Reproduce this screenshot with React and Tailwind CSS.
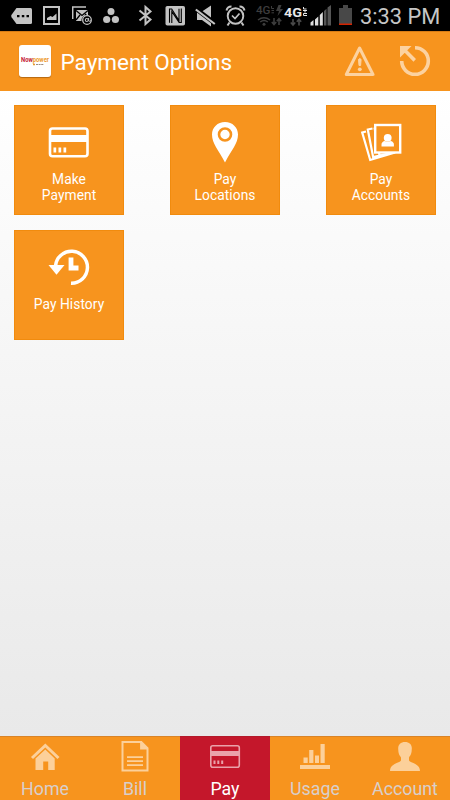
import React from "react";

/* Every icon is drawn in screen units; `box` gives its x, y, width and height. */
function Glyph({ box, className = "", children }) {
  const [x, y, w, h] = box;
  return (
    <svg width={w} height={h} viewBox={`${x} ${y} ${w} ${h}`} className={`block shrink-0 ${className}`} fill="none">
      {children}
    </svg>
  );
}

function StatusBar() {
  const c = "#c3c3c3";
  return (
    <div className="flex h-[31px] w-full shrink-0 bg-black">
      <Glyph box={[11, 0, 21, 31]} className="ml-[11px]">
        <path d="M16.5 8H30.500Q32 8 32 9.500V22.500Q32 24 30.500 24H16.500L11.600 17.200Q10.800 16 11.600 14.800Z" fill={c} />
        <path d="M17 15h2.500v2.200H17zM21.800 15h2.500v2.200h-2.500zM26.500 15H29v2.200h-2.500z" fill="#000" />
      </Glyph>
      <Glyph box={[43, 0, 17, 31]} className="ml-[11px]">
        <rect x="44" y="7" width="15" height="17" stroke={c} strokeWidth="2" />
        <path d="M47 20v-2l3.500-2 2 1 4-3.500V20z" fill={c} />
      </Glyph>
      <Glyph box={[72, 0, 20, 31]} className="ml-[12px]">
        <path d="M72.700 19V7H86" stroke={c} strokeWidth="1.500" />
        <path d="M76 10h12v5.500a5 5 0 0 0-6.500 5.500H76z" fill={c} />
        <path d="M76 10.500l6 5 6-5M76 20l4-5M88 17l-3-3" stroke="#000" strokeWidth="1.300" />
        <circle cx="87" cy="20" r="4.300" fill="#000" stroke={c} strokeWidth="1.300" />
        <circle cx="86.800" cy="20" r="1.500" stroke={c} strokeWidth="1.100" />
        <path d="M88.600 18v2.800q1.300 1.200 2.300-.3" stroke={c} strokeWidth="1" />
      </Glyph>
      <Glyph box={[103, 0, 17, 31]} className="ml-[11px]">
        <circle cx="111" cy="11.500" r="3.500" fill={c} />
        <circle cx="106.700" cy="19.500" r="3.600" fill={c} />
        <circle cx="115.400" cy="19.500" r="3.600" fill={c} />
      </Glyph>
      <Glyph box={[138, 0, 15, 31]} className="ml-[18px]">
        <path d="M139.500 10.500l11 9-5 4.500V7l5 4.500-11 9" stroke={c} strokeWidth="2" />
      </Glyph>
      <Glyph box={[165, 0, 20, 31]} className="ml-[12px]">
        <rect x="165.500" y="6" width="19.500" height="19.500" rx="1.800" fill={c} />
        <path d="M169.500 22.800V9h2.200l7.300 11.500V8.800M181.300 8.500v14h-2.200L171.800 11.500v11.500" stroke="#000" strokeWidth="1.100" />
      </Glyph>
      <Glyph box={[195, 0, 21, 31]} className="ml-[10px]">
        <path d="M197 11.500h5l9-6v21L202 20h-5z" fill={c} />
        <path d="M195.500 8.500l19 14.500" stroke="#000" strokeWidth="4.600" />
        <path d="M195.800 9.500l19 14.500" stroke={c} strokeWidth="2.200" />
      </Glyph>
      <Glyph box={[225, 0, 21, 31]} className="ml-[9px]">
        <circle cx="235.500" cy="16" r="7.800" stroke={c} strokeWidth="1.900" />
        <path d="M226.500 10.500a5 5 0 0 1 5-4M244.500 10.500a5 5 0 0 0-5-4M229.500 22.500l-2 3M241.500 22.500l2 3" stroke={c} strokeWidth="2" />
        <path d="M232 15.500l3 3 4.500-5" stroke={c} strokeWidth="1.700" />
      </Glyph>
      <Glyph box={[255, 0, 28, 31]} className="ml-[9px] text-[#3d3d3d]">
        <text x="256" y="14" fontFamily="Roboto, sans-serif" fontWeight="500" fontSize="11" textLength="14.500" lengthAdjust="spacingAndGlyphs" fill="currentColor">4G</text>
        <path d="M271.500 6v2.500h2.500M271.500 10.500h2.500M271.500 12.800h2.500" stroke="currentColor" />
        <path d="M278.500 5h3l-1.500 4h3l-5.500 7 1.500-5H276z" fill="currentColor" />
        <path d="M258 20q6-4.500 12 0M260.200 22q3.800-3 7.600 0" stroke="currentColor" strokeWidth="1.500" />
        <circle cx="264" cy="24.300" r="1.500" fill="currentColor" />
        <path d="M274 18v6M271.800 22l2.200 2.500 2.200-2.500M279 25v-6M276.800 21.200l2.200-2.500 2.200 2.500" stroke="currentColor" strokeWidth="1.600" />
      </Glyph>
      <Glyph box={[283, 0, 25, 31]} className="ml-0 text-[#e8e8e8]">
        <text x="284" y="17" fontFamily="Roboto, sans-serif" fontWeight="700" fontSize="13.500" textLength="18" lengthAdjust="spacingAndGlyphs" fill="currentColor">4G</text>
        <path d="M303.500 7v2h3M303 10.500h4M305 10.500v2M307 13.500h-3.500v2h3.500" stroke="currentColor" />
        <path d="M293 19v6M290.800 22.500l2.200 2.500 2.200-2.500M299 25.500v-6M296.800 21.700l2.200-2.500 2.200 2.500" stroke="#4a4a4a" strokeWidth="1.600" />
      </Glyph>
      <Glyph box={[310, 0, 21, 31]} className="ml-[2px]">
        <path d="M310.500 25.500v-3l3-2.500v5.500zM315 25.500v-6l3.300-3v9zM319.800 25.500V15l3-3v13.500z" fill="#dedede" />
        <path d="M324 25.500V11l2.500-2.300v16.800zM327.500 25.500V7.500L331 5v20.500z" fill="#555" />
      </Glyph>
      <Glyph box={[339, 0, 13, 31]} className="ml-[8px]">
        <path d="M343 5h5v3h4v17h-13V8h4z" fill="#484848" />
        <path d="M339 23.500h13V25h-13z" fill="#d52300" />
      </Glyph>
      <span className="ml-[8px] mt-[2px] whitespace-nowrap text-[21.800px] leading-[30px] text-[#c6c6c6]">3:33 PM</span>
    </div>
  );
}

function Header() {
  return (
    <header className="flex h-[60px] shrink-0 border-t border-[#d77c15] bg-[#f7941e]">
      <div className="ml-[19px] mt-[13px] h-8 w-8 shrink-0 rounded-[3px] bg-white shadow-[0_1px_1px_rgba(100,50,0,0.45)]">
        <Glyph box={[0, 0, 32, 32]}>
          <text x="2" y="17.300" fontFamily="Roboto, sans-serif" fontWeight="700" fontSize="6.500" textLength="28" lengthAdjust="spacingAndGlyphs" fill="#c51a35">
            Now<tspan fill="#ee9b2b">power</tspan>
          </text>
          <path d="M14 19.500h2" stroke="#e49b2e" strokeWidth="1.500" />
          <path d="M17 19.500h8" stroke="#9a8b80" strokeDasharray="2 .6" />
        </Glyph>
      </div>
      <h1 className="ml-[9.500px] whitespace-nowrap text-[22.500px] font-normal leading-[61px] text-white">Payment Options</h1>
      <div className="ml-auto mr-[18px] mt-[13px] flex gap-[24px]">
        <Glyph box={[344, 45, 31, 34]}>
          <path d="M359.600 48L373 74.500H346.300Z" stroke="#fcd2a0" strokeWidth="3" strokeLinejoin="round" />
          <path d="M358.500 59.500q1.300-2 2.600 0l-.5 6h-1.600z" fill="#fcd2a0" stroke="#fcd2a0" />
          <circle cx="359.800" cy="69.300" r="1.900" fill="#fcd2a0" />
        </Glyph>
        <Glyph box={[399, 45, 33, 34]}>
          <path d="M415 47.700A13.300 13.300 0 1 1 401.700 61" stroke="#fcd2a0" strokeWidth="3.600" />
          <path d="M400 46h11.500L400 57.500zM404.500 52.500l2.500-2.500 9 9-2.500 2.800z" fill="#fcd2a0" />
        </Glyph>
      </div>
    </header>
  );
}

const tiles = [
  {
    label: ["Make", "Payment"],
    icon: (
      <Glyph box={[48, 121, 42, 44]}>
        <rect x="50" y="128.500" width="37.500" height="27.800" rx="2.500" stroke="#fff" strokeWidth="2.600" />
        <path d="M50 135h38v7H50zM53.500 147.500h2.700v5h-2.700zM58.500 147.500h2.700v5h-2.700zM63.500 147.500h2.700v5h-2.700z" fill="#fff" />
      </Glyph>
    ),
  },
  {
    label: ["Pay", "Locations"],
    icon: (
      <Glyph box={[205, 121, 40, 44]}>
        <path d="M225 122c-7.500 0-13 5.500-13 12.500 0 9 6.500 15.500 13 28 6.500-12.500 13-19 13-28C238 127.500 232.500 122 225 122z" fill="#fff" />
        <circle cx="225" cy="134.500" r="6" stroke="#f7941e" strokeWidth="2.600" />
      </Glyph>
    ),
  },
  {
    label: ["Pay", "Accounts"],
    icon: (
      <Glyph box={[360, 121, 42, 44]}>
        <path d="M366 131.500l-3.800 1 8 27.500 25-7.500M372.500 128.500l-4.700 1 5.300 27.500 22-5M374.500 127.500l5 28" stroke="#fff" strokeWidth="2.200" />
        <rect x="375.200" y="125" width="25" height="27.500" fill="#f7941e" stroke="#fff" strokeWidth="2.400" />
        <circle cx="387.700" cy="137.800" r="3.900" fill="#fff" />
        <path d="M381.500 146.500v-2q0-2.500 3-3.500l3.200 1 3.200-1q3 1 3 3.500v2z" fill="#fff" />
      </Glyph>
    ),
  },
  {
    label: ["Pay History"],
    icon: (
      <Glyph box={[48, 246, 42, 44]}>
        <path d="M55.500 266A16 16 0 1 1 71 283.300" stroke="#fff" strokeWidth="3.500" />
        <path d="M48.500 265h16l-8 9.800z" fill="#fff" />
        <path d="M71 257.500v10.500h7.500" stroke="#fff" strokeWidth="4.800" />
      </Glyph>
    ),
  },
];

function Tile({ tile }) {
  return (
    <button className="flex h-[110px] w-[110px] flex-col items-center border border-[#f18b0e] bg-[#f7941e] pt-[15px] text-white">
      {tile.icon}
      <span className="mt-[6px] text-[13.800px] leading-4 tracking-[0.05px]">
        {tile.label.map((line) => (
          <span key={line} className="block whitespace-nowrap">{line}</span>
        ))}
      </span>
    </button>
  );
}

const cream = "#fcd09a";
const tabs = [
  {
    name: "Home",
    icon: (
      <Glyph box={[29, 738, 32, 36]}>
        <path d="M32 758l13.300-12.500L58.500 758" stroke={cream} strokeWidth="3" />
        <path d="M35.500 758.500l9.800-9 9.400 9V770h-6.500v-8.500h-5V770h-7.700z" fill={cream} />
      </Glyph>
    ),
  },
  {
    name: "Bill",
    icon: (
      <Glyph box={[119, 738, 32, 36]}>
        <path d="M122.500 742h18.800l6.200 6.200v22.300h-25z" stroke={cream} strokeWidth="2" />
        <path d="M141 741v7.500h7M127 757.200h16M127 761.200h16M127 765.200h16" stroke={cream} strokeWidth="1.800" />
        <path d="M141 742v6.500h6.500z" fill={cream} />
      </Glyph>
    ),
  },
  {
    name: "Pay",
    active: true,
    icon: (
      <Glyph box={[209, 738, 32, 36]}>
        <rect x="210.800" y="745.800" width="28.500" height="21.500" rx="2" stroke="#eaa2aa" strokeWidth="1.600" />
        <path d="M211 751h28v5h-28zM213.500 760.500h2v3.500h-2zM217.300 760.500h2v3.500h-2zM221.200 760.500h2v3.500h-2z" fill="#eaa2aa" />
      </Glyph>
    ),
  },
  {
    name: "Usage",
    icon: (
      <Glyph box={[299, 738, 32, 36]}>
        <path d="M300 765h30v4h-30zM303.500 757.500h4.200v5.500h-4.200zM309.200 750h4.200v13h-4.200zM315 755.500h4v7.500h-4zM320.500 744h4.200v19h-4.200z" fill={cream} />
      </Glyph>
    ),
  },
  {
    name: "Account",
    icon: (
      <Glyph box={[389, 738, 32, 36]}>
        <path d="M398.300 750c-.7-5 2-8 6.700-8s7.500 3 6.700 8c0 4.500-2 6-2.700 7.500v3c1.500 2.500 11 3 11 10.500h-30c0-7.500 9.500-8 11-10.500v-3c-.7-1.500-2.700-3-2.700-7.500z" fill={cream} />
      </Glyph>
    ),
  },
];

function TabBar() {
  return (
    <nav className="grid h-[64px] shrink-0 grid-cols-5">
      {tabs.map((tab) => (
        <button
          key={tab.name}
          className={`flex flex-col items-center border-t pt-px ${
            tab.active
              ? "border-[#b3192a] bg-[#c4172b] text-white"
              : "border-b border-[#d98428] bg-[#f7941e] text-[#d8cfcb]"
          }`}
        >
          {tab.icon}
          <span className="mt-[4px] text-[17.800px] leading-[22px]">{tab.name}</span>
        </button>
      ))}
    </nav>
  );
}

export default function App() {
  return (
    <div className="flex h-[800px] w-[450px] flex-col overflow-hidden bg-white font-['Roboto',sans-serif]">
      <StatusBar />
      <Header />
      <main className="min-h-0 flex-1 bg-linear-to-b from-white to-[#e9e9e9] px-[14px] pt-[14px]">
        <div className="grid grid-cols-[110px_110px_110px] justify-between gap-y-[15px]">
          {tiles.map((tile) => (
            <Tile key={tile.label.join(" ")} tile={tile} />
          ))}
        </div>
      </main>
      <TabBar />
    </div>
  );
}
